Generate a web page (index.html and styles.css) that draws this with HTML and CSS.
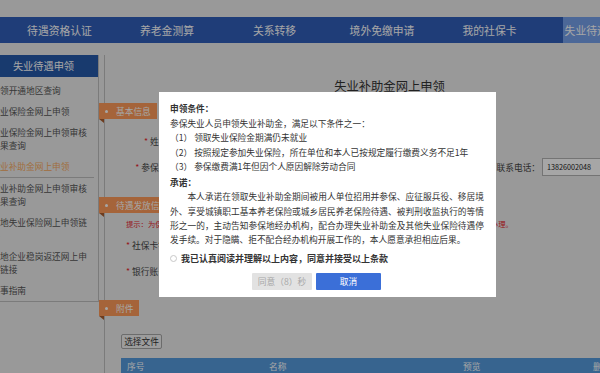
FILE: index.html
```html
<!DOCTYPE html>
<html lang="zh-CN">
<head>
<meta charset="utf-8">
<title>失业补助金网上申领</title>
<link rel="stylesheet" href="styles.css">
</head>
<body>
<div class="page">
  <div class="topbar"></div>
  <nav class="nav">
    <div class="nav-item">待遇资格认证</div>
    <div class="nav-item">养老金测算</div>
    <div class="nav-item">关系转移</div>
    <div class="nav-item">境外免缴申请</div>
    <div class="nav-item">我的社保卡</div>
    <div class="nav-item active">失业待遇申领</div>
  </nav>
  <div class="layout">
    <aside class="sidebar">
      <div class="side-head">失业待遇申领</div>
      <ul class="side-list">
        <li>申领开通地区查询</li>
        <li>失业保险金网上申领</li>
        <li>失业保险金网上申领审核结果查询</li>
        <li class="active">失业补助金网上申领</li>
        <li>失业补助金网上申领审核结果查询</li>
        <li>异地失业保险网上申领链接</li>
        <li>异地企业稳岗返还网上申领链接</li>
        <li>办事指南</li>
      </ul>
    </aside>
    <main class="panel">
      <h1 class="panel-title">失业补助金网上申领</h1>

      <div class="tab">基本信息</div>
      <div class="form1">
        <div class="row">
          <div class="label"><span class="star">*</span>姓名：</div>
          <div class="field"></div>
        </div>
        <div class="row">
          <div class="label"><span class="star">*</span>参保地：</div>
          <div class="field"></div>
          <div class="label label-r"><span class="star">*</span>联系电话：</div>
          <div class="input">13826002048</div>
        </div>
      </div>

      <div class="tab tab2">待遇发放信息</div>
      <p class="hint">提示：为保障待遇及时足额发放，请准确填写本人社会保障卡银行账号，如社保卡未激活金融功能请先到银行网点办理。</p>
      <div class="form2">
        <div class="row2"><span class="star">*</span>社保卡银行：<span class="field"></span></div>
        <div class="row2"><span class="star">*</span>银行账号：<span class="field"></span></div>
      </div>

      <div class="tab tab3">附件</div>
      <div class="file-btn">选择文件</div>
      <div class="table-head">
        <span>序号</span>
        <span>名称</span>
        <span>预览</span>
        <span>删除</span>
      </div>
    </main>
  </div>
</div>

<div class="mask"></div>

<div class="modal">
  <p class="m-title">申领条件：</p>
  <p>参保失业人员申领失业补助金，满足以下条件之一：</p>
  <p>（1） 领取失业保险金期满仍未就业</p>
  <p>（2） 按照规定参加失业保险，所在单位和本人已按规定履行缴费义务不足1年</p>
  <p>（3） 参保缴费满1年但因个人原因解除劳动合同</p>
  <p class="m-title m-title2">承诺：</p>
  <p class="m-para">本人承诺在领取失业补助金期间被用人单位招用并参保、应征服兵役、移居境外、享受城镇职工基本养老保险或城乡居民养老保险待遇、被判刑收监执行的等情形之一的，主动告知参保地经办机构，配合办理失业补助金及其他失业保险待遇停发手续。对于隐瞒、拒不配合经办机构开展工作的，本人愿意承担相应后果。</p>
  <div class="m-check"><span class="radio"></span>我已认真阅读并理解以上内容，同意并接受以上条款</div>
  <div class="m-actions">
    <div class="btn btn-wait">同意（8）秒</div>
    <div class="btn btn-cancel">取消</div>
  </div>
</div>
</body>
</html>
```

FILE: styles.css
```css
* {
  box-sizing: border-box;
  margin: 0;
  padding: 0;
}

html,
body {
  width: 600px;
  height: 373px;
  overflow: hidden;
}

body {
  background: #ececec;
  font-family: "Noto Sans CJK SC", "Noto Sans", sans-serif;
  font-size: 8.7px;
  color: #444;
}

.topbar {
  height: 17px;
}

/* top navigation */
.nav {
  display: flex;
  gap: 38.5px;
  height: 26px;
  padding-left: 25px;
  background: #305eb9;
  white-space: nowrap;
}

.nav-item {
  flex: none;
  width: 69px;
  text-align: center;
  line-height: 26px;
  font-size: 10.8px;
  color: #fff;
}

.nav-item.active {
  background: #75a0ea;
}

/* layout */
.layout {
  display: flex;
  align-items: flex-start;
  margin-top: 12px;
}

.sidebar {
  flex: none;
  width: 110px;
  margin-left: -11px;
  border-right: 1px solid #bdbdbd;
  border-bottom: 1px solid #bdbdbd;
}

.side-head {
  height: 22px;
  line-height: 22px;
  text-align: center;
  background: #2659a9;
  color: #fff;
  font-size: 10.2px;
}

.side-list {
  list-style: none;
  margin-top: 2.5px;
}

.side-list li {
  padding: 4px 6px 4px 2.3px;
  line-height: 13px;
  color: #555;
}

.side-list li.active {
  color: #f6a95c;
  border-bottom: 1px solid #bdbdbd;
  margin-right: 4px;
}

.panel {
  flex: none;
  width: 570px;
  min-height: 330px;
  margin-left: 5px;
  border-left: 1px solid #bdbdbd;
  padding-top: 23px;
}

.panel-title {
  text-align: center;
  font-size: 12.3px;
  font-weight: normal;
  line-height: 16px;
  color: #333;
  margin-bottom: 9px;
}

/* ribbon tabs */
.tab {
  position: relative;
  display: flex;
  align-items: center;
  gap: 8px;
  width: max-content;
  height: 16px;
  margin-left: -6px;
  padding: 0 6px;
  background: #fe9a59;
  color: #fff;
  white-space: nowrap;
}

.tab::before {
  content: "";
  width: 3px;
  height: 3px;
  border-radius: 50%;
  background: #fff;
}

.tab::after {
  content: "";
  position: absolute;
  left: 0;
  top: 100%;
  border-top: 4px solid #a95c2e;
  border-left: 5px solid transparent;
}

.tab2 {
  margin-top: 19px;
}

.tab3 {
  margin-top: 18px;
}

/* form section 1 */
.form1 {
  display: flex;
  flex-direction: column;
  gap: 4px;
  margin-top: 11px;
}

.row {
  display: grid;
  grid-template-columns: 71px 314px 52px 130px;
  align-items: center;
  height: 22px;
}

.label {
  text-align: right;
  white-space: nowrap;
}

.label-r {
  padding-right: 2px;
}

.star {
  color: #e61e2e;
  margin-right: 2px;
}

.field {
  display: inline-block;
  width: 250px;
  height: 18px;
  margin-left: 4px;
  border: 1px solid #bdbdbd;
  background: #fff;
  vertical-align: middle;
}

.input {
  height: 18px;
  padding-left: 4px;
  border: 1px solid #b3b3b3;
  background: #fff;
  line-height: 16px;
  font-size: 7.2px;
  color: #222;
}

/* form section 2 */
.hint {
  margin-top: 4.5px;
  padding-left: 21px;
  line-height: 13px;
  font-size: 7.3px;
  color: #e61e2e;
  white-space: nowrap;
}

.form2 {
  display: flex;
  flex-direction: column;
  gap: 4px;
  margin-top: 3.5px;
  padding-left: 21px;
}

.row2 {
  display: flex;
  align-items: center;
  height: 22px;
  white-space: nowrap;
}

/* attachments */
.file-btn {
  width: 41px;
  height: 15px;
  margin: 18px 0 0 16px;
  border: 1px solid #a6a6a6;
  border-radius: 2px;
  background: #f0f0f0;
  text-align: center;
  line-height: 13px;
  color: #333;
}

.table-head {
  display: grid;
  grid-template-columns: 142px 194px 130px 1fr;
  height: 20px;
  margin: 9px 0 0 16px;
  padding-left: 6px;
  background: #559adc;
  color: #fff;
  line-height: 18px;
}

/* dimming layer + dialog */
.mask {
  position: fixed;
  inset: 0;
  background: rgba(0, 0, 0, 0.35);
}

.modal {
  position: fixed;
  left: 159px;
  top: 92px;
  width: 337px;
  height: 205px;
  padding: 10px 12px 0 11px;
  background: #fff;
  color: #333;
  font-size: 8.7px;
  line-height: 14.3px;
}

.m-title {
  font-weight: bold;
  margin-bottom: 0.7px;
}

.m-title2 {
  margin-top: 1.8px;
  margin-bottom: 0;
}

.m-para {
  text-indent: 2em;
  text-align: justify;
}

.m-check {
  display: flex;
  align-items: center;
  gap: 4px;
  margin-top: 4.5px;
  font-size: 9px;
  font-weight: bold;
  line-height: 14px;
  white-space: nowrap;
}

.radio {
  flex: none;
  width: 7px;
  height: 7px;
  border: 1px solid #c8c8c8;
  border-radius: 50%;
}

.m-actions {
  display: flex;
  gap: 4px;
  margin-top: 7px;
  padding-left: 82px;
}

.btn {
  height: 17px;
  line-height: 17px;
  text-align: center;
  border-radius: 1px;
}

.btn-wait {
  width: 60px;
  background: #e2e2e2;
  color: #a8a8a8;
}

.btn-cancel {
  width: 65px;
  background: #3b6fd8;
  color: #fff;
}
```
